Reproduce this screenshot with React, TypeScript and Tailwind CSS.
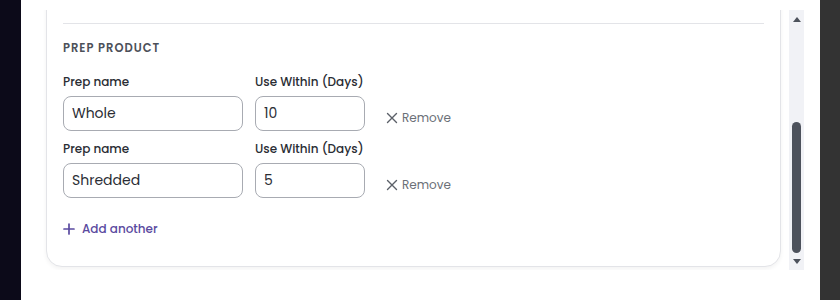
import React from "react";

function Row({ name, days }: { name: string; days: string }) {
  return (
    <div className="flex items-end">
      <div className="flex flex-col w-[180px]">
        <label className="text-[12px] leading-[16px] font-medium text-[#2a2d34] mb-[6px]">Prep name</label>
        <div className="h-[35px] w-[180px] rounded-[8px] border border-[#a8abb2] flex items-center px-[8px] text-[14px] text-[#2a2d34]">
          {name}
        </div>
      </div>
      <div className="flex flex-col w-[110px] ml-[12px]">
        <label className="text-[12px] leading-[16px] font-medium text-[#2a2d34] mb-[6px] whitespace-nowrap">Use Within (Days)</label>
        <div className="h-[35px] w-[110px] rounded-[8px] border border-[#a8abb2] flex items-center px-[8px] text-[14px] text-[#2a2d34]">
          {days}
        </div>
      </div>
      <div className="ml-[21px] mb-[4px] flex items-center text-[12px] text-[#6b7077]">
        <svg width="12" height="12" viewBox="0 0 12 12" className="mr-[4px]">
          <path d="M1.5 1.5 L10.5 10.5 M10.5 1.5 L1.5 10.5" stroke="#5b6068" strokeWidth="1.4" strokeLinecap="round" />
        </svg>
        Remove
      </div>
    </div>
  );
}

export default function App() {
  return (
    <div
      className="w-[840px] h-[300px] flex bg-white overflow-hidden"
      style={{ fontFamily: "Poppins, 'DejaVu Sans', sans-serif" }}
    >
      <div className="w-[21px] h-full bg-[#0c0a19]" />
      <div className="flex-1 flex pt-[10px]">
        <div className="w-[768px] h-[260px] overflow-hidden pl-[25px] pt-0">
          <div className="-mt-[20px] w-[735px] rounded-[16px] border border-[#e3e4e8] bg-white shadow-[0_2px_4px_rgba(0,0,0,0.05)] px-[16px] pb-[29px]">
            <div className="h-[33px] border-b border-[#e3e4e8]" />
            <div className="pt-[17px] text-[11.5px] leading-[14px] font-semibold tracking-[0.085em] text-[#4c5059]">PREP PRODUCT</div>
            <div className="mt-[19px] flex flex-col gap-[10px]">
              <Row name="Whole" days="10" />
              <Row name="Shredded" days="5" />
            </div>
            <div className="mt-[23px] flex items-center text-[12px] leading-[16px] font-medium text-[#5a4aa0]">
              <svg width="12" height="12" viewBox="0 0 12 12" className="mr-[7px]">
                <path d="M6 1 V11 M1 6 H11" stroke="#5a4aa0" strokeWidth="1.7" strokeLinecap="round" />
              </svg>
              Add another
            </div>
          </div>
        </div>
        <div className="w-[15px] h-[260px] bg-[#f1f2f6] flex flex-col items-center ml-[0px]">
          <div className="mt-[7px] w-0 h-0 border-l-[4px] border-r-[4px] border-b-[5px] border-l-transparent border-r-transparent border-b-[#4d525c]" />
          <div className="flex-1" />
          <div className="w-[9px] h-[131px] rounded-[5px] bg-[#4d525c]" />
          <div className="mt-[6px] mb-[6px] w-0 h-0 border-l-[4px] border-r-[4px] border-t-[5px] border-l-transparent border-r-transparent border-t-[#4d525c]" />
        </div>
      </div>
      <div className="w-[20px] h-full bg-[#333333] ml-auto" />
    </div>
  );
}
